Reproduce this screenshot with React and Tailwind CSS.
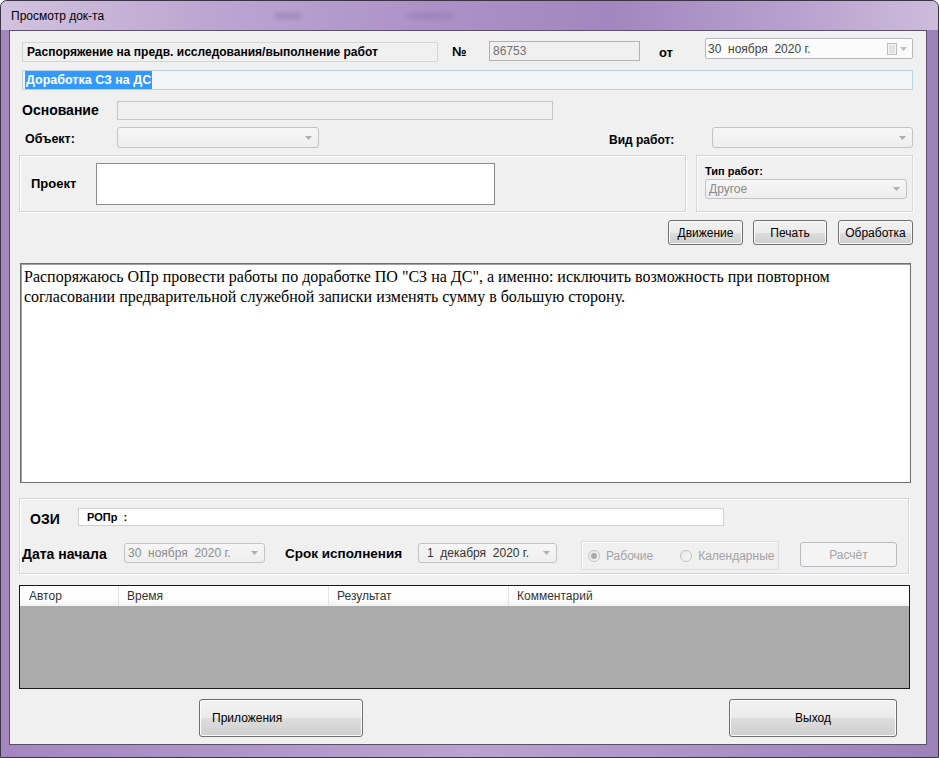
import React from "react";

const ui = { fontFamily: '"Liberation Sans", Arial, sans-serif' };

const Arrow = ({ color = "#9a9a9a" }) => (
  <svg width="7" height="4" viewBox="0 0 7 4">
    <path d="M0 0h7L3.5 4z" fill={color} />
  </svg>
);

const Combo = ({ className = "", text, textClass = "text-[#8a8a8a]" }) => (
  <div
    className={`flex items-center justify-between rounded-[3px] border border-[#c3c3c3] bg-[linear-gradient(180deg,#f6f6f6,#eeeeee)] pl-[3px] pr-[6px] ${className}`}
  >
    <span className={`text-[12px] whitespace-pre ${textClass}`}>{text}</span>
    <Arrow color="#b0b0b0" />
  </div>
);

const Btn = ({ className = "", children, disabled }) => (
  <div
    className={`flex items-center rounded-[3px] border text-[12px] ${
      disabled
        ? "border-[#b8bcbf] bg-[#f4f4f4] text-[#a3a3a3]"
        : "border-[#707070] bg-[linear-gradient(180deg,#f2f2f2_0%,#ebebeb_50%,#dddddd_51%,#cfcfcf_100%)] text-black shadow-[inset_0_0_0_1px_#fbfbfb]"
    } ${className}`}
  >
    {children}
  </div>
);

const Panel = ({ className = "", children }) => (
  <div
    className={`border border-[#d5d5d5] shadow-[inset_1px_1px_0_#ffffff,1px_1px_0_#ffffff] ${className}`}
  >
    {children}
  </div>
);

const Radio = ({ checked, label }) => (
  <div className="flex items-center gap-[6px]">
    <span className="flex h-[12px] w-[12px] items-center justify-center rounded-full border border-[#c2c2c2] bg-[linear-gradient(135deg,#e8e8e8,#f8f8f8)]">
      {checked && <span className="h-[6px] w-[6px] rounded-full bg-[#a9a9a9]" />}
    </span>
    <span className="text-[12px] text-[#a3a3a3]">{label}</span>
  </div>
);

export default function App() {
  return (
    <div
      style={ui}
      className="flex h-[758px] w-[939px] flex-col overflow-hidden rounded-t-[7px] border border-[#3c3346] bg-[linear-gradient(90deg,#a487bf_0%,#b9a3cf_50%,#9d82ba_100%)] pb-[12px] pl-[8px] pr-[11px]"
    >
      {/* title bar */}
      <div className="-ml-[8px] -mr-[11px] flex h-[29px] items-center bg-[linear-gradient(90deg,#d2c2df_0%,#bca6d2_22%,#ad92c8_45%,#a286bf_65%,#b8a1cf_85%,#cdbcdc_100%)] pl-[10px]">
        <span className="text-[12px] text-black">Просмотр док-та</span>
        <span className="ml-[170px] h-[6px] w-[28px] rounded-full bg-[#8f78a8] opacity-50 blur-[2px]" />
        <span className="ml-[105px] h-[6px] w-[46px] rounded-full bg-[#8f78a8] opacity-50 blur-[2px]" />
      </div>

      {/* client area */}
      <div className="flex flex-1 flex-col border border-[#5d506c] bg-[#f0f0f0]">
        {/* row 1 */}
        <div className="mt-[7px] flex h-[24px] items-start">
          <div className="ml-[12px] mt-[4px] flex h-[20px] w-[416px] items-center border border-[#d6d6d6] bg-[#f0f0f0] pl-[4px]">
            <span className="text-[12px] font-bold text-black">
              Распоряжение на предв. исследования/выполнение работ
            </span>
          </div>
          <div className="ml-[14px] mt-[4px] w-[37px] text-[13px] font-bold">№</div>
          <div className="mt-[3px] flex h-[20px] w-[151px] items-center border border-[#b2b2b2] bg-[#f0f0f0] pl-[3px]">
            <span className="text-[12px] text-[#707070]">86753</span>
          </div>
          <div className="mt-[5px] w-[65px] pl-[19px] text-[13px] font-bold">от</div>
          <div className="flex h-[21px] w-[208px] items-center justify-between rounded-[2px] border border-[#b5b8bd] bg-[#fbfbfb] pl-[2px] pr-[5px]">
            <span className="whitespace-pre text-[12px] text-[#444]">30  ноября  2020 г.</span>
            <div className="flex items-center gap-[3px]">
              <svg width="10" height="12" viewBox="0 0 10 12">
                <rect x="0.5" y="0.5" width="9" height="11" fill="#f4f4f4" stroke="#bdbdbd" />
                <path d="M2 3h6M2 5h6M2 7h6M2 9h6" stroke="#d0d0d0" />
              </svg>
              <Arrow color="#c0c0c0" />
            </div>
          </div>
        </div>

        {/* row 2 */}
        <div className="ml-[12px] mt-[8px] flex h-[20px] w-[891px] items-center border border-[#b9d4ea] bg-[#f3f5f7] pl-[2px]">
          <span className="bg-[#3399ff] px-[1px] text-[12.5px] font-bold text-white">Доработка СЗ на ДС</span>
        </div>

        {/* row 3 */}
        <div className="mt-[11px] flex h-[19px] items-center">
          <div className="ml-[12px] w-[95px] text-[14px] font-bold">Основание</div>
          <div className="h-[19px] w-[436px] border border-[#c6c6c6] bg-[#f0f0f0]" />
        </div>

        {/* row 4 */}
        <div className="mt-[7px] flex h-[21px] items-center">
          <div className="ml-[15px] mt-[4px] w-[92px] text-[12.5px] font-bold">Объект:</div>
          <Combo className="h-[21px] w-[202px]" text="" />
          <div className="ml-[290px] mt-[4px] w-[103px] text-[12px] font-bold">Вид работ:</div>
          <Combo className="h-[21px] w-[201px]" text="" />
        </div>

        {/* row 5 */}
        <div className="mt-[7px] flex h-[57px]">
          <Panel className="ml-[9px] flex h-[57px] w-[667px] items-start">
            <div className="ml-[11px] mt-[18px] w-[65px] text-[13px] font-bold">Проект</div>
            <div className="mt-[7px] h-[42px] w-[399px] border border-[#8a8a8a] bg-white" />
          </Panel>
          <Panel className="ml-[10px] flex h-[57px] w-[217px] flex-col pl-[8px] pt-[7px]">
            <div className="h-[16px] text-[11px] font-bold">Тип работ:</div>
            <Combo className="h-[20px] w-[202px]" text="Другое" />
          </Panel>
        </div>

        {/* row 6 */}
        <div className="mt-[8px] flex h-[25px]">
          <Btn className="ml-[658px] h-[25px] w-[75px] justify-center">Движение</Btn>
          <Btn className="ml-[10px] h-[25px] w-[74px] justify-center">Печать</Btn>
          <Btn className="ml-[11px] h-[25px] w-[75px] justify-center">Обработка</Btn>
        </div>

        {/* text */}
        <div
          className="ml-[10px] mt-[18px] h-[220px] w-[891px] border border-[#6f6f6f] bg-white px-[3px] pt-[3px] text-[16px] leading-[20px] text-black shadow-[inset_1px_1px_0_#a0a0a0]"
          style={{ fontFamily: '"Liberation Serif", "Times New Roman", serif' }}
        >
          Распоряжаюсь ОПр провести работы по доработке ПО "СЗ на ДС", а именно: исключить возможность при повторном
          согласовании предварительной служебной записки изменять сумму в большую сторону.
        </div>

        {/* panel 3 */}
        <Panel className="ml-[9px] mt-[15px] flex h-[76px] w-[890px] flex-col">
          <div className="mt-[9px] flex h-[18px] items-center">
            <div className="ml-[10px] mt-[4px] w-[48px] text-[14px] font-bold">ОЗИ</div>
            <div className="flex h-[18px] w-[646px] items-center border border-[#d0d0d0] bg-white pl-[8px]">
              <span className="whitespace-pre text-[11px] font-bold">РОПр  :</span>
            </div>
          </div>
          <div className="mt-[15px] flex h-[29px] items-start">
            <div className="ml-[2px] mt-[3px] w-[102px] text-[14px] font-bold">Дата начала</div>
            <Combo className="mt-[2px] h-[20px] w-[141px]" text="30  ноября  2020 г." textClass="text-[#8d8d8d]" />
            <div className="ml-[20px] mt-[3px] w-[133px] text-[13.5px] font-bold">Срок исполнения</div>
            <Combo className="mt-[2px] h-[20px] w-[139px] pl-[8px]" text="1  декабря  2020 г." textClass="text-[#333]" />
            <div className="ml-[24px] flex h-[29px] w-[198px] items-center gap-[27px] border border-[#dcdcdc] pl-[6px] shadow-[inset_1px_1px_0_#ffffff]">
              <Radio checked label="Рабочие" />
              <Radio label="Календарные" />
            </div>
            <Btn disabled className="ml-[21px] mt-[1px] h-[25px] w-[97px] justify-center">
              Расчёт
            </Btn>
          </div>
        </Panel>

        {/* grid */}
        <div className="ml-[9px] mt-[11px] flex h-[104px] w-[891px] flex-col border border-[#1a1a1a] bg-[#ababab]">
          <div className="flex h-[20px] bg-[linear-gradient(180deg,#ffffff_0%,#ffffff_60%,#f2f2f2_100%)] text-[12px] text-[#333]">
            <div className="flex w-[99px] items-center border-r border-[#e3e3e3] pl-[9px]">Автор</div>
            <div className="flex w-[210px] items-center border-r border-[#e3e3e3] pl-[8px]">Время</div>
            <div className="flex w-[180px] items-center border-r border-[#e3e3e3] pl-[8px]">Результат</div>
            <div className="flex flex-1 items-center pl-[8px]">Комментарий</div>
          </div>
        </div>

        {/* bottom buttons */}
        <div className="mt-[10px] flex h-[38px]">
          <Btn className="ml-[189px] h-[38px] w-[164px] pl-[12px]">Приложения</Btn>
          <Btn className="ml-[366px] h-[38px] w-[168px] justify-center">Выход</Btn>
        </div>
      </div>
    </div>
  );
}
